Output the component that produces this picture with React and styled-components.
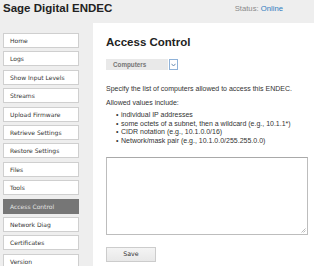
import React from 'react';
import styled, { createGlobalStyle } from 'styled-components';

const Global = createGlobalStyle`
  html, body { margin: 0; padding: 0; background: #eeeeee; }
  body { font-family: "Liberation Sans", Arial, sans-serif; }
  * { box-sizing: border-box; }
`;

const Page = styled.div`
  width: 314px;
  height: 266px;
  overflow: hidden;
  display: flex;
  flex-direction: column;
  background: #eeeeee;
`;

const Header = styled.header`
  height: 23px;
  flex-shrink: 0;
  display: flex;
  justify-content: space-between;
  align-items: flex-start;
  padding: 0 31px 0 3px;
`;

const Brand = styled.h1`
  margin: 0;
  padding-top: 1px;
  font-size: 11.5px;
  line-height: 14px;
  font-weight: bold;
  color: #222;
`;

const Status = styled.div`
  margin-top: 3.5px;
  font-size: 7.7px;
  line-height: 10px;
  color: #8a8a8a;
`;

const Online = styled.span`
  color: #2f7bc0;
`;

const Main = styled.div`
  flex: 1;
  display: flex;
  min-height: 0;
`;

const Sidebar = styled.nav`
  width: 93px;
  flex-shrink: 0;
  padding: 10px 0 0 3px;
  display: flex;
  flex-direction: column;
  gap: 3.4px;
`;

const NavButton = styled.div`
  width: 76px;
  height: 15px;
  flex-shrink: 0;
  border: 1px solid ${p => (p.$active ? '#767676' : '#cfcfcf')};
  background: ${p => (p.$active ? '#767676' : '#ffffff')};
  color: ${p => (p.$active ? '#e2e2e2' : '#333333')};
  font-family: "DejaVu Sans", Verdana, sans-serif;
  font-size: 6px;
  line-height: 13px;
  padding-left: 6px;
  white-space: nowrap;
`;

const Content = styled.main`
  flex: 1;
  background: #ffffff;
  padding: 12px 0 0 13px;
  color: #333;
`;

const Title = styled.h2`
  margin: 0;
  font-size: 11.5px;
  line-height: 14px;
  font-weight: bold;
  color: #222;
`;

const Select = styled.div`
  margin-top: 10px;
  display: flex;
  align-items: stretch;
  width: 72px;
  height: 11px;
`;

const SelectValue = styled.div`
  flex: 1;
  background: #e9e9e9;
  color: #757575;
  font-size: 6.3px;
  font-weight: bold;
  line-height: 11px;
  padding-left: 7px;
`;

const SelectArrow = styled.div`
  width: 9px;
  margin-left: 1px;
  border: 1px solid #8fb2d8;
  background: #fff;
  display: flex;
  align-items: center;
  justify-content: center;
`;

const Text = styled.p`
  margin: ${p => p.$mt}px 0 0;
  font-size: 7px;
  line-height: 9px;
`;

const List = styled.ul`
  margin: 4px 0 0;
  padding-left: 10px;
  font-size: 7px;
  line-height: 8.6px;
  list-style: none;
`;

const Item = styled.li`
  &::before {
    content: "•";
    display: inline-block;
    width: 5px;
  }
`;

const Area = styled.div`
  position: relative;
  margin-top: 12px;
  width: 201.5px;
  height: 78px;
  border: 1px solid #bdbdbd;
  border-top-color: #a9a9a9;
  background: #fff;
`;

const Grip = styled.svg`
  position: absolute;
  right: 1px;
  bottom: 1px;
`;

const SaveButton = styled.div`
  margin-top: 12px;
  width: 50px;
  height: 14.5px;
  border: 1px solid #cccccc;
  background: linear-gradient(#f4f4f4, #e8e8e8);
  font-family: "DejaVu Sans", Verdana, sans-serif;
  font-size: 6.3px;
  line-height: 12.5px;
  text-align: center;
  color: #333;
`;

const items = [
  'Home',
  'Logs',
  'Show Input Levels',
  'Streams',
  'Upload Firmware',
  'Retrieve Settings',
  'Restore Settings',
  'Files',
  'Tools',
  'Access Control',
  'Network Diag',
  'Certificates',
  'Version',
];

const rules = [
  'individual IP addresses',
  'some octets of a subnet, then a wildcard (e.g., 10.1.1*)',
  'CIDR notation (e.g., 10.1.0.0/16)',
  'Network/mask pair (e.g., 10.1.0.0/255.255.0.0)',
];

export default function App() {
  return (
    <Page>
      <Global />
      <Header>
        <Brand>Sage Digital ENDEC</Brand>
        <Status>
          Status: <Online>Online</Online>
        </Status>
      </Header>
      <Main>
        <Sidebar>
          {items.map(it => (
            <NavButton key={it} $active={it === 'Access Control'}>
              {it}
            </NavButton>
          ))}
        </Sidebar>
        <Content>
          <Title>Access Control</Title>
          <Select>
            <SelectValue>Computers</SelectValue>
            <SelectArrow>
              <svg width="5" height="4" viewBox="0 0 5 4">
                <path d="M0.5 0.8 L2.5 3 L4.5 0.8" fill="none" stroke="#5b7fa8" strokeWidth="0.9" />
              </svg>
            </SelectArrow>
          </Select>
          <Text $mt={14}>Specify the list of computers allowed to access this ENDEC.</Text>
          <Text $mt={5}>Allowed values include:</Text>
          <List>
            {rules.map(r => (
              <Item key={r}>{r}</Item>
            ))}
          </List>
          <Area>
            <Grip width="5" height="5" viewBox="0 0 5 5">
              <path d="M4.5 0.5 L0.5 4.5 M4.5 2.5 L2.5 4.5" stroke="#aaa" strokeWidth="0.8" />
            </Grip>
          </Area>
          <SaveButton>Save</SaveButton>
        </Content>
      </Main>
    </Page>
  );
}
